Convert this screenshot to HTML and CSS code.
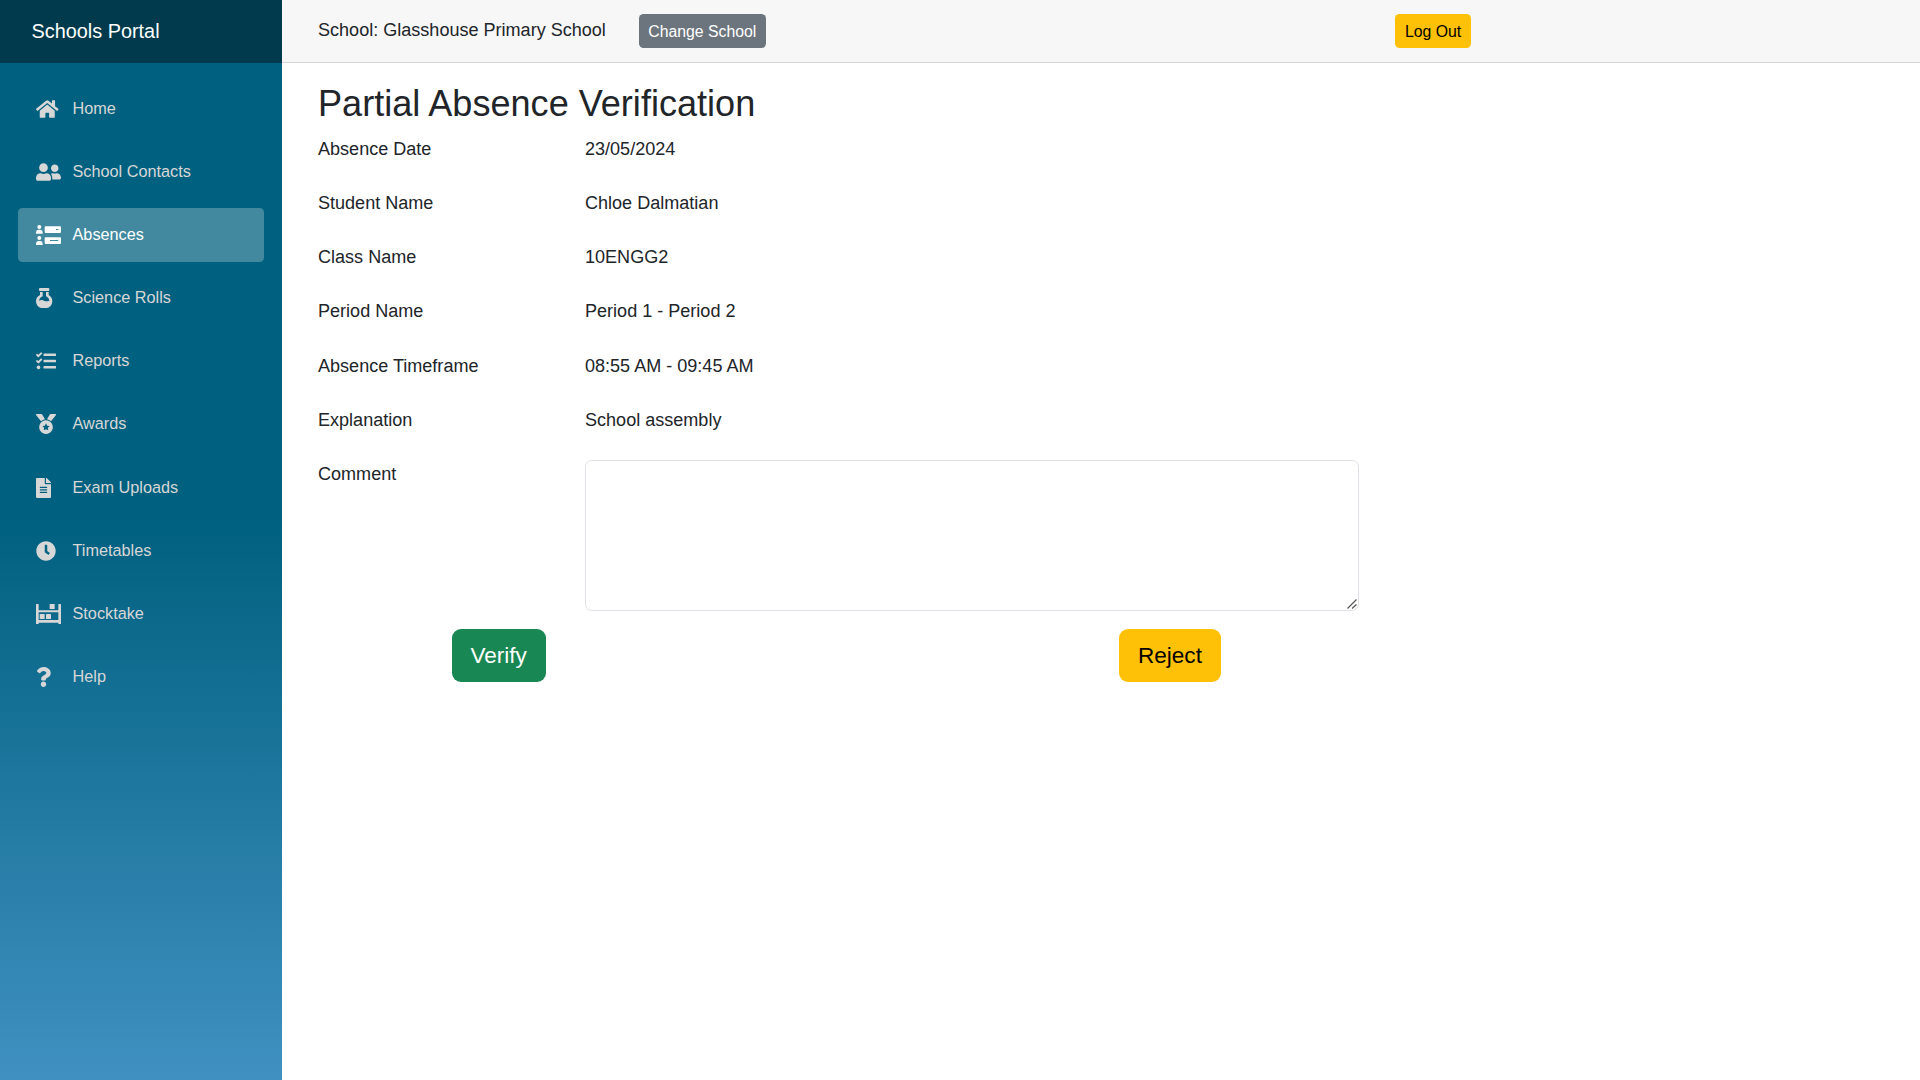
FILE: index.html
```html
<!DOCTYPE html>
<html lang="en">
<head>
<meta charset="utf-8">
<title>Schools Portal</title>
<link rel="stylesheet" href="styles.css">
</head>
<body>
<div class="page">
  <aside class="sidebar">
    <div class="brand">Schools Portal</div>
    <nav class="nav">
      <a class="nav-link"><svg class="icon" viewBox="0 0 640 512"><path d="M280.37 148.26L96 300.11V464a16 16 0 0 0 16 16l112.06-.29a16 16 0 0 0 15.92-16V368a16 16 0 0 1 16-16h64a16 16 0 0 1 16 16v95.64a16 16 0 0 0 16 16.05L464 480a16 16 0 0 0 16-16V300L295.67 148.26a12.19 12.19 0 0 0-15.3 0zM571.6 251.47L488 182.56V44.05a12 12 0 0 0-12-12h-56a12 12 0 0 0-12 12v72.61L318.47 43a48 48 0 0 0-61 0L4.34 251.47a12 12 0 0 0-1.6 16.9l25.5 31A12 12 0 0 0 45.15 301l235.22-193.74a12.19 12.19 0 0 1 15.3 0L530.9 301a12 12 0 0 0 16.9-1.6l25.5-31a12 12 0 0 0-1.7-16.93z"/></svg>Home</a>
      <a class="nav-link"><svg class="icon" viewBox="0 0 640 512"><path d="M192 256c61.9 0 112-50.1 112-112S253.9 32 192 32 80 82.1 80 144s50.1 112 112 112zm76.8 32h-8.3c-20.8 10-43.9 16-68.5 16s-47.6-6-68.5-16h-8.3C51.6 288 0 339.6 0 403.2V432c0 26.5 21.5 48 48 48h288c26.5 0 48-21.5 48-48v-28.8c0-63.6-51.6-115.2-115.2-115.2zM480 256c53 0 96-43 96-96s-43-96-96-96-96 43-96 96 43 96 96 96zm48 32h-3.8c-13.9 4.8-28.6 8-44.2 8s-30.3-3.2-44.2-8H432c-20.4 0-39.2 5.9-55.7 15.4 24.4 26.3 39.7 61.2 39.7 99.8v38.4c0 2.2-.5 4.3-.6 6.4H592c26.5 0 48-21.5 48-48 0-61.9-50.1-112-112-112z"/></svg>School Contacts</a>
      <a class="nav-link active"><svg class="icon" viewBox="0 0 75 60"><circle cx="10" cy="6" r="6"/><path d="M0 26v-3q0-9 8-9h4q8 0 8 9v3z"/><circle cx="10" cy="39" r="6"/><path d="M0 60v-3q0-9 8-9h4q8 0 8 9v3z"/><path fill-rule="evenodd" d="M29 4h43q3 0 3 3v14q0 3-3 3H29q-3 0-3-3V7q0-3 3-3zm31 8v3h7v-3zM29 37h43q3 0 3 3v14q0 3-3 3H29q-3 0-3-3V40q0-3 3-3zm13 8v3h25v-3z"/></svg>Absences</a>
      <a class="nav-link"><svg class="icon" viewBox="0 0 75 60"><rect x="9" width="31" height="9" rx="3"/><path fill-rule="evenodd" d="M12 12h26v9C45 25 49 32 49 39c0 8-4 15-10 19q-3 2-6 2H16q-3 0-6-2C4 54 0 47 0 39c0-7 4-14 12-18zm8 0v13C14 28 10 32 9 38c7-4 12-1 17 1 5 1 9 1 14-1-1-6-4-10-10-13V12z"/></svg>Science Rolls</a>
      <a class="nav-link"><svg class="icon" viewBox="0 0 640 512"><path d="M139.61 35.5a12 12 0 0 0-17 0L58.93 98.81l-22.7-22.12a12 12 0 0 0-17 0L3.53 92.41a12 12 0 0 0 0 17l47.59 47.4a12.78 12.78 0 0 0 17.61 0l15.59-15.62L156.52 69a12.09 12.09 0 0 0 .09-17zm0 159.19a12 12 0 0 0-17 0l-63.68 63.72-22.7-22.1a12 12 0 0 0-17 0L3.53 252a12 12 0 0 0 0 17L51 316.5a12.77 12.77 0 0 0 17.6 0l15.7-15.69 72.2-72.22a12 12 0 0 0 .09-16.9zM64 368c-26.49 0-48.59 21.5-48.59 48S37.53 464 64 464a48 48 0 0 0 0-96zm432 16H208a16 16 0 0 0-16 16v32a16 16 0 0 0 16 16h288a16 16 0 0 0 16-16v-32a16 16 0 0 0-16-16zm0-320H208a16 16 0 0 0-16 16v32a16 16 0 0 0 16 16h288a16 16 0 0 0 16-16V80a16 16 0 0 0-16-16zm0 160H208a16 16 0 0 0-16 16v32a16 16 0 0 0 16 16h288a16 16 0 0 0 16-16v-32a16 16 0 0 0-16-16z"/></svg>Reports</a>
      <a class="nav-link"><svg class="icon" viewBox="0 0 75 60"><path d="M2 0h14q2 0 3 2l8 14q-7 1-12 6L0 3Q-1 0 2 0zM58 0H44q-2 0-3 2l-8 14q7 1 12 6L60 3q1-3-2-3z"/><path fill-rule="evenodd" d="M30 19a20.5 20.5 0 1 0 .01 0zM30 28l3.5 7 7.5 1-5.5 5.5 1.3 7.5-6.8-3.5-6.8 3.5 1.3-7.5L19 36l7.5-1z"/></svg>Awards</a>
      <a class="nav-link"><svg class="icon" viewBox="0 0 640 512"><path fill-rule="evenodd" d="M224 136V0H24C10.7 0 0 10.7 0 24v464c0 13.3 10.7 24 24 24h336c13.3 0 24-10.7 24-24V160H248c-13.2 0-24-10.8-24-24zM108 224h168q12 0 12 12v8q0 12-12 12H108q-12 0-12-12v-8q0-12 12-12zm0 64h168q12 0 12 12v8q0 12-12 12H108q-12 0-12-12v-8q0-12 12-12zm0 64h168q12 0 12 12v8q0 12-12 12H108q-12 0-12-12v-8q0-12 12-12zM384 121.9V128H256V0h6.1c6.4 0 12.5 2.5 17 7l97.9 98c4.5 4.5 7 10.6 7 16.9z"/></svg>Exam Uploads</a>
      <a class="nav-link"><svg class="icon" viewBox="0 0 640 512"><path d="M256,8C119,8,8,119,8,256S119,504,256,504,504,393,504,256,393,8,256,8Zm92.49,313h0l-20,25a16,16,0,0,1-22.49,2.5h0l-67-49.72a40,40,0,0,1-15-31.23V112a16,16,0,0,1,16-16h32a16,16,0,0,1,16,16V256l58,42.5A16,16,0,0,1,348.49,321Z"/></svg>Timetables</a>
      <a class="nav-link"><svg class="icon" viewBox="0 0 75 60"><path fill-rule="evenodd" d="M1.5 0h5q1.5 0 1.5 1.5V19h59V1.5Q67 0 68.5 0h5Q75 0 75 1.5V60h-8v-4H8v4H0V1.5Q0 0 1.5 0zM8 25v23h59V25z"/><rect x="41" width="15" height="15" rx="1.5"/><rect x="11" y="30" width="15" height="15" rx="1.5"/><rect x="30" y="30" width="15" height="15" rx="1.5"/></svg>Stocktake</a>
      <a class="nav-link"><svg class="icon" viewBox="0 0 640 512"><path d="M202.021 0C122.202 0 70.503 32.703 29.914 91.026c-7.363 10.58-5.093 25.086 5.178 32.874l43.138 32.709c10.373 7.865 25.132 6.026 33.253-4.148 25.049-31.381 43.63-49.449 82.757-49.449 30.764 0 68.816 19.799 68.816 49.631 0 22.552-18.617 34.134-48.993 51.164-35.423 19.86-82.299 44.576-82.299 106.405V320c0 13.255 10.745 24 24 24h72.471c13.255 0 24-10.745 24-24v-5.773c0-42.86 125.268-44.645 125.268-160.627C377.504 66.256 286.902 0 202.021 0zM192 373.459c-38.196 0-69.271 31.075-69.271 69.271 0 38.195 31.075 69.27 69.271 69.27s69.271-31.075 69.271-69.271-31.075-69.27-69.271-69.27z"/></svg>Help</a>
    </nav>
  </aside>
  <main class="main">
    <header class="top-row">
      <span class="school">School: Glasshouse Primary School</span>
      <button class="btn btn-sm btn-secondary">Change School</button>
      <button class="btn btn-sm btn-warning logout">Log Out</button>
    </header>
    <section class="content">
      <h2 class="title">Partial Absence Verification</h2>
      <div class="fields">
        <span>Absence Date</span><span>23/05/2024</span>
        <span>Student Name</span><span>Chloe Dalmatian</span>
        <span>Class Name</span><span>10ENGG2</span>
        <span>Period Name</span><span>Period 1 - Period 2</span>
        <span>Absence Timeframe</span><span>08:55 AM - 09:45 AM</span>
        <span>Explanation</span><span>School assembly</span>
        <label for="comment">Comment</label>
        <div class="comment-box">
          <textarea id="comment" class="comment"></textarea>
          <svg class="grip" viewBox="0 0 10 10"><path d="M.5 9.5l9-9M5 9.5l4.5-4"/></svg>
        </div>
      </div>
      <div class="actions">
        <button class="btn btn-lg btn-success">Verify</button>
        <button class="btn btn-lg btn-warning">Reject</button>
      </div>
    </section>
  </main>
</div>
</body>
</html>
```
FILE: styles.css
```css
* {
  box-sizing: border-box;
}

body {
  margin: 0;
  font: 18.06px/27px "Liberation Sans", Arial, sans-serif;
  color: #212529;
  background: #fff;
}

.page {
  display: flex;
  height: 100vh;
}

.sidebar {
  flex: 0 0 282px;
  background: linear-gradient(180deg, #00607f 0%, #00607f 48%, #4091c1 100%);
}

.brand {
  height: 63px;
  padding-left: 31.5px;
  font-size: 19.86px;
  line-height: 62px;
  color: #fff;
  background: #003a4c;
}

.nav {
  display: flex;
  flex-direction: column;
  gap: 9.03px;
  padding: 18.4px 18px 0;
}

.nav-link {
  display: flex;
  align-items: center;
  gap: 11.5px;
  height: 54.15px;
  padding: 0 0 0.6px 18px;
  border-radius: 4.5px;
  font-size: 16.25px;
  color: #d7d7d7;
}

.nav-link.active {
  color: #fff;
  background: #42899f;
}

.icon {
  flex: none;
  width: 25px;
  height: 20px;
  margin-top: 1px;
  fill: currentColor;
}

.main {
  flex: 1;
}

.top-row {
  display: flex;
  align-items: center;
  height: 63px;
  padding-left: 36px;
  border-bottom: 1px solid #d6d5d5;
  background: #f7f7f7;
}

.school {
  width: 320.5px;
  padding-bottom: 2px;
}

.logout {
  margin-left: 629px;
}

.btn {
  border: 0;
  font-family: inherit;
  white-space: nowrap;
}

.btn-sm {
  height: 34px;
  padding: 1px 9.8px 0;
  border-radius: 4.5px;
  font-size: 15.8px;
}

.btn-lg {
  height: 53px;
  padding: 0 19px;
  border-radius: 9px;
  font-size: 22.56px;
}

.btn-secondary {
  color: #fff;
  background: #6c757d;
}

.btn-warning {
  color: #000;
  background: #ffc107;
}

.btn-success {
  color: #fff;
  background: #198754;
}

.content {
  padding: 19px 0 0 36px;
}

.title {
  margin: 0 0 8px;
  font-size: 36.1px;
  font-weight: 400;
  line-height: 44px;
}

.fields {
  display: grid;
  grid-template-columns: 267px 774px;
  grid-template-rows: repeat(6, 54.15px) 151px;
  padding-top: 1.6px;
}

.fields span,
.fields label {
  padding-top: 0.4px;
}

.comment-box {
  position: relative;
}

.comment {
  display: block;
  width: 100%;
  height: 151px;
  border: 1px solid #dee2e6;
  border-radius: 6.8px;
  background: #fff;
  resize: none;
}

.grip {
  position: absolute;
  right: 2px;
  bottom: 2px;
  width: 10px;
  height: 10px;
  fill: none;
  stroke: #555;
  stroke-width: 1.2;
}

.actions {
  display: grid;
  grid-template-columns: 667.5px auto;
  justify-items: start;
  padding: 18px 0 0 133.5px;
}
```
